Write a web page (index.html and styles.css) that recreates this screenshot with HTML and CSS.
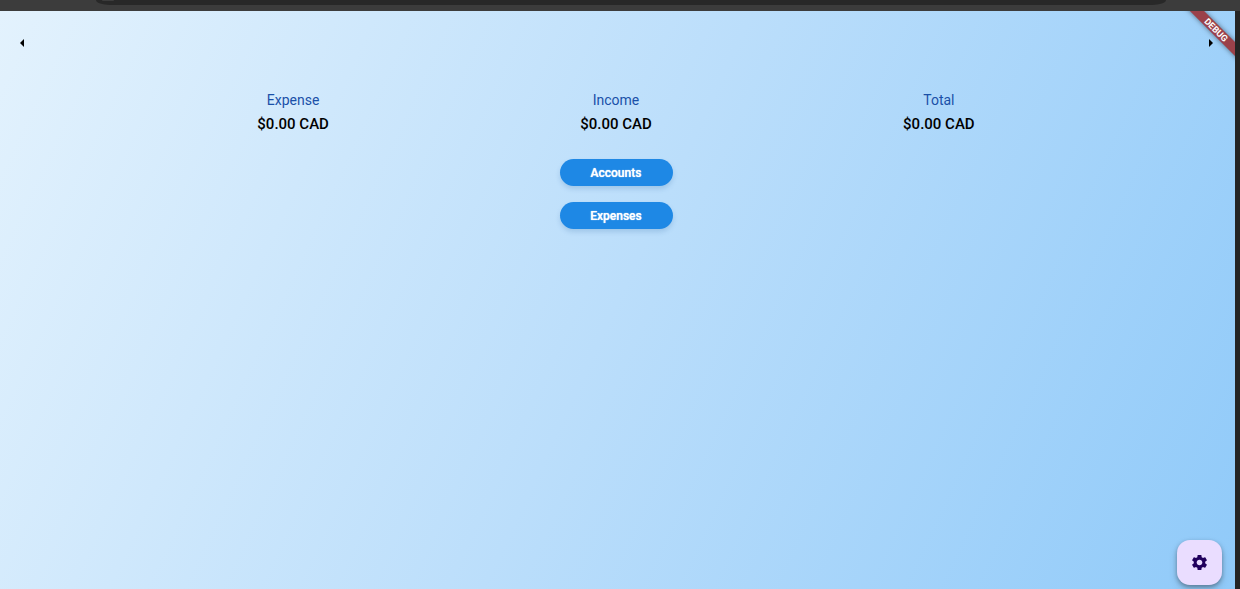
FILE: index.html
```html
<!DOCTYPE html>
<html lang="en">
<head>
<meta charset="utf-8">
<meta name="viewport" content="width=device-width, initial-scale=1">
<title>Budget</title>
<link rel="stylesheet" href="styles.css">
</head>
<body>
<div class="window">
  <header class="toolbar"><div class="address"><span class="address-icon"></span></div></header>
  <main class="app">
    <nav class="pager" aria-label="Period">
      <button class="arrow" aria-label="Previous"><svg width="20" height="20" viewBox="0 0 20 20"><path d="M12 6v8l-4-4z"/></svg></button>
      <button class="arrow" aria-label="Next"><svg width="20" height="20" viewBox="0 0 20 20"><path d="M8 6v8l4-4z"/></svg></button>
    </nav>
    <section class="summary">
      <div class="figure"><span class="label">Expense</span><span class="amount">$0.00 CAD</span></div>
      <div class="figure"><span class="label">Income</span><span class="amount">$0.00 CAD</span></div>
      <div class="figure"><span class="label">Total</span><span class="amount">$0.00 CAD</span></div>
    </section>
    <div class="actions">
      <button class="pill">Accounts</button>
      <button class="pill">Expenses</button>
    </div>
    <button class="fab" aria-label="Settings"><svg width="19" height="19" viewBox="0 0 24 24"><path d="M19.14 12.94c.04-.3.06-.61.06-.94 0-.32-.02-.64-.07-.94l2.03-1.58c.18-.14.23-.41.12-.61l-1.92-3.32c-.12-.22-.37-.29-.59-.22l-2.39.96c-.5-.38-1.03-.7-1.62-.94l-.36-2.54c-.04-.24-.24-.41-.48-.41h-3.84c-.24 0-.43.17-.47.41l-.36 2.54c-.59.24-1.13.57-1.62.94l-2.39-.96c-.22-.08-.47 0-.59.22L2.74 8.87c-.12.21-.08.47.12.61l2.03 1.58c-.05.3-.09.63-.09.94s.02.64.07.94l-2.03 1.58c-.18.14-.23.41-.12.61l1.92 3.32c.12.22.37.29.59.22l2.39-.96c.5.38 1.03.7 1.62.94l.36 2.54c.05.24.24.41.48.41h3.84c.24 0 .44-.17.47-.41l.36-2.54c.59-.24 1.13-.56 1.62-.94l2.39.96c.22.08.47 0 .59-.22l1.92-3.32c.12-.22.07-.47-.12-.61l-2.01-1.58zM12 15.6c-1.98 0-3.6-1.62-3.6-3.6s1.62-3.6 3.6-3.6 3.6 1.62 3.6 3.6-1.62 3.6-3.6 3.6z"/></svg></button>
    <div class="corner"><span class="ribbon">DEBUG</span></div>
  </main>
</div>
</body>
</html>
```
FILE: styles.css
```css
* { box-sizing: border-box; }
body { margin: 0; font-family: Roboto, "Liberation Sans", sans-serif; }
button { border: 0; font: inherit; cursor: pointer; }
svg { display: block; }

.window {
  display: flex;
  flex-direction: column;
  min-height: 100vh;
  padding-right: 5px;
  background: #242424;
}
.toolbar {
  height: 11px;
  margin-right: -5px;
  padding: 0 74px 0 96px;
  background: #3c3c3c;
  overflow: hidden;
}
.address {
  height: 5px;
  padding-left: 6px;
  background: #282828;
  border-radius: 0 0 14px 14px / 0 0 5px 5px;
}
.address-icon {
  display: block;
  width: 12px;
  height: 1px;
  background: #3c3c3c;
  border-radius: 0 0 6px 6px;
}
.app {
  position: relative;
  flex: 1;
  padding-right: 3px;
  background: linear-gradient(115deg, #e3f2fd, #bbdefb 50%, #90caf9);
}
.pager {
  display: flex;
  justify-content: space-between;
  padding: 22px 11px 0 12px;
}
.arrow {
  padding: 0;
  background: none;
  color: #000;
}
.summary {
  display: flex;
  justify-content: space-evenly;
  padding: 35px 6px 0;
}
.figure {
  display: flex;
  flex-direction: column;
  align-items: center;
  line-height: 24px;
}
.label {
  color: #1a50a8;
  font-size: 14px;
}
.amount {
  font-size: 15px;
  font-weight: 500;
}
.actions {
  display: flex;
  flex-direction: column;
  align-items: center;
  gap: 16px;
  padding-top: 23px;
}
.pill {
  width: 113px;
  height: 27px;
  padding: 0;
  border-radius: 14px;
  background: #1e88e5;
  box-shadow: 0 3px 5px rgba(40, 100, 160, .2);
  color: #fff;
  font-size: 12px;
  font-weight: 500;
  text-shadow: 0 0 1px #fff;
}
.fab {
  position: absolute;
  right: 13px;
  bottom: 4px;
  display: grid;
  place-items: center;
  width: 45px;
  height: 45px;
  padding: 0;
  border-radius: 13px;
  background: #eaddff;
  box-shadow: 0 2px 4px rgba(0, 0, 0, .3), 0 4px 8px rgba(0, 0, 0, .15);
}
.fab svg { fill: #21005d; }
.corner {
  position: absolute;
  top: 0;
  right: 0;
  width: 60px;
  height: 60px;
  overflow: hidden;
  pointer-events: none;
}
.ribbon {
  position: absolute;
  top: 14px;
  right: -21px;
  width: 80px;
  background: #9b414a;
  box-shadow: 0 0 5px rgba(0, 0, 0, .5);
  color: #fff;
  font-size: 9px;
  font-weight: 700;
  line-height: 10px;
  text-align: center;
  transform: rotate(45deg);
}
```
